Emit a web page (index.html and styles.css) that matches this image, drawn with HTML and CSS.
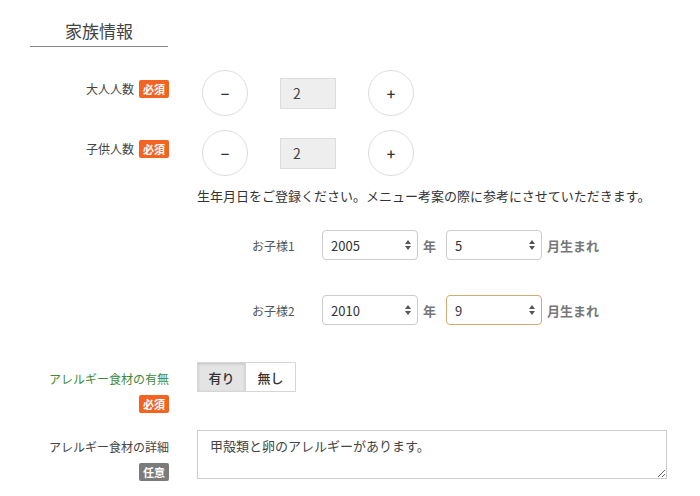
FILE: index.html
```html
<!DOCTYPE html>
<html lang="ja">
<head>
  <meta charset="UTF-8">
  <meta name="viewport" content="width=device-width, initial-scale=1.0">
  <title>家族情報</title>
  <link rel="stylesheet" href="styles.css">
</head>
<body>
  <div class="form">
    <div class="section-title">家族情報</div>

    <div class="form-row stepper-row">
      <div class="row-label">大人人数<span class="badge">必須</span></div>
      <div class="row-body stepper">
        <button class="circle-btn">−</button>
        <input type="text" class="count" value="2" readonly>
        <button class="circle-btn">+</button>
      </div>
    </div>

    <div class="form-row stepper-row">
      <div class="row-label">子供人数<span class="badge">必須</span></div>
      <div class="row-body stepper">
        <button class="circle-btn">−</button>
        <input type="text" class="count" value="2" readonly>
        <button class="circle-btn">+</button>
      </div>
    </div>

    <div class="note">生年月日をご登録ください。メニュー考案の際に参考にさせていただきます。</div>

    <div class="children">
      <div class="child-row">
        <div class="child-label">お子様1</div>
        <div class="select-wrap">
          <select><option>2005</option></select>
          <svg class="select-arrows" width="6" height="10" viewBox="0 0 6 10"><path d="M0 4 L3 0 L6 4 Z M0 6 L3 10 L6 6 Z" fill="#555"/></svg>
        </div>
        <span class="unit unit-year">年</span>
        <div class="select-wrap">
          <select><option>5</option></select>
          <svg class="select-arrows" width="6" height="10" viewBox="0 0 6 10"><path d="M0 4 L3 0 L6 4 Z M0 6 L3 10 L6 6 Z" fill="#555"/></svg>
        </div>
        <span class="unit">月生まれ</span>
      </div>
      <div class="child-row">
        <div class="child-label">お子様2</div>
        <div class="select-wrap">
          <select><option>2010</option></select>
          <svg class="select-arrows" width="6" height="10" viewBox="0 0 6 10"><path d="M0 4 L3 0 L6 4 Z M0 6 L3 10 L6 6 Z" fill="#555"/></svg>
        </div>
        <span class="unit unit-year">年</span>
        <div class="select-wrap focused">
          <select><option>9</option></select>
          <svg class="select-arrows" width="6" height="10" viewBox="0 0 6 10"><path d="M0 4 L3 0 L6 4 Z M0 6 L3 10 L6 6 Z" fill="#555"/></svg>
        </div>
        <span class="unit">月生まれ</span>
      </div>
    </div>

    <div class="form-row allergy-row">
      <div class="row-label">
        <div class="label-green">アレルギー食材の有無</div>
        <div class="label-badge"><span class="badge">必須</span></div>
      </div>
      <div class="row-body toggle">
        <button class="toggle-btn active">有り</button>
        <button class="toggle-btn">無し</button>
      </div>
    </div>

    <div class="form-row detail-row">
      <div class="row-label">
        <div>アレルギー食材の詳細</div>
        <div class="label-badge"><span class="badge optional">任意</span></div>
      </div>
      <div class="row-body">
        <textarea class="detail">甲殻類と卵のアレルギーがあります。</textarea>
      </div>
    </div>
  </div>
</body>
</html>
```

FILE: styles.css
```css
body {
  margin: 0;
  font-family: "Noto Sans CJK JP", "Noto Sans", sans-serif;
  color: #333;
  background-color: #fff;
}
.section-title {
  width: 138px;
  margin-left: 30px;
  padding-top: 19px;
  padding-bottom: 3px;
  font-size: 17px;
  line-height: 24px;
  text-align: center;
  color: #444;
  border-bottom: 1px solid #888;
}
.form-row {
  display: flex;
}
.row-label {
  width: 169px;
  flex-shrink: 0;
  text-align: right;
  font-size: 12px;
  line-height: 18px;
  color: #444;
}
.row-body {
  margin-left: 28px;
}
.badge {
  display: inline-block;
  margin-left: 5px;
  padding: 0 4px;
  height: 18px;
  line-height: 18px;
  font-size: 11px;
  font-weight: bold;
  color: #fff;
  background-color: #f2641f;
  border-radius: 2px;
  vertical-align: top;
}
.badge.optional {
  background-color: #7b7b7b;
}
.stepper-row {
  margin-top: 14px;
}
.section-title + .stepper-row {
  margin-top: 23px;
}
.stepper-row .row-label {
  padding-top: 10px;
}
.stepper {
  display: flex;
  align-items: center;
  gap: 32px;
  padding-left: 5px;
}
.circle-btn {
  width: 46px;
  height: 46px;
  padding: 0;
  border: 1px solid #ddd;
  border-radius: 50%;
  background-color: #fff;
  font-family: "Noto Sans CJK JP", sans-serif;
  font-size: 15px;
  font-weight: 500;
  color: #333;
}
.count {
  width: 56px;
  height: 31px;
  box-sizing: border-box;
  padding: 0 12px;
  border: 1px solid #ddd;
  background-color: #eee;
  font-family: "Noto Sans CJK JP", sans-serif;
  font-size: 14px;
  color: #444;
}
.note {
  margin: 10px 0 0 197px;
  font-size: 13px;
  line-height: 20px;
  color: #333;
}
.children {
  margin-top: 24px;
  padding-left: 252px;
}
.child-row {
  display: flex;
  align-items: center;
  height: 30px;
}
.child-row + .child-row {
  margin-top: 35px;
}
.child-label {
  width: 70px;
  font-size: 12px;
  color: #555;
}
.select-wrap {
  position: relative;
  width: 96px;
  height: 30px;
}
.select-wrap select {
  appearance: none;
  -webkit-appearance: none;
  width: 100%;
  height: 100%;
  box-sizing: border-box;
  padding: 0 8px;
  border: 1px solid #ccc;
  border-radius: 4px;
  background-color: #fff;
  font-family: "Noto Sans CJK JP", sans-serif;
  font-size: 13px;
  color: #333;
}
.select-wrap.focused select {
  border-color: #d3ab72;
}
.select-arrows {
  position: absolute;
  right: 7px;
  top: 10px;
  pointer-events: none;
}
.unit {
  margin-left: 5px;
  font-size: 13px;
  font-weight: bold;
  color: #777;
}
.unit-year {
  margin-right: 10px;
}
.allergy-row {
  margin-top: 37px;
}
.allergy-row .row-label,
.detail-row .row-label {
  padding-top: 8px;
}
.label-green {
  color: #3f8a3a;
}
.label-badge {
  margin-top: 7px;
}
.toggle {
  display: flex;
  align-items: flex-start;
}
.toggle-btn {
  width: 50px;
  height: 30px;
  padding: 0;
  border: 1px solid #d6d6d6;
  background-color: #fff;
  font-family: "Noto Sans CJK JP", sans-serif;
  font-size: 13px;
  font-weight: 500;
  color: #333;
}
.toggle-btn + .toggle-btn {
  border-left: none;
}
.toggle-btn.active {
  width: 49px;
  background-color: #e4e4e4;
  box-shadow: inset 0 1px 3px rgba(0, 0, 0, 0.15);
}
.detail-row {
  margin-top: 17px;
}
.detail {
  display: block;
  width: 470px;
  height: 49px;
  box-sizing: border-box;
  padding: 5px 12px;
  border: 1px solid #ccc;
  font-family: "Noto Sans CJK JP", sans-serif;
  font-size: 13px;
  line-height: 20px;
  color: #444;
}
```
